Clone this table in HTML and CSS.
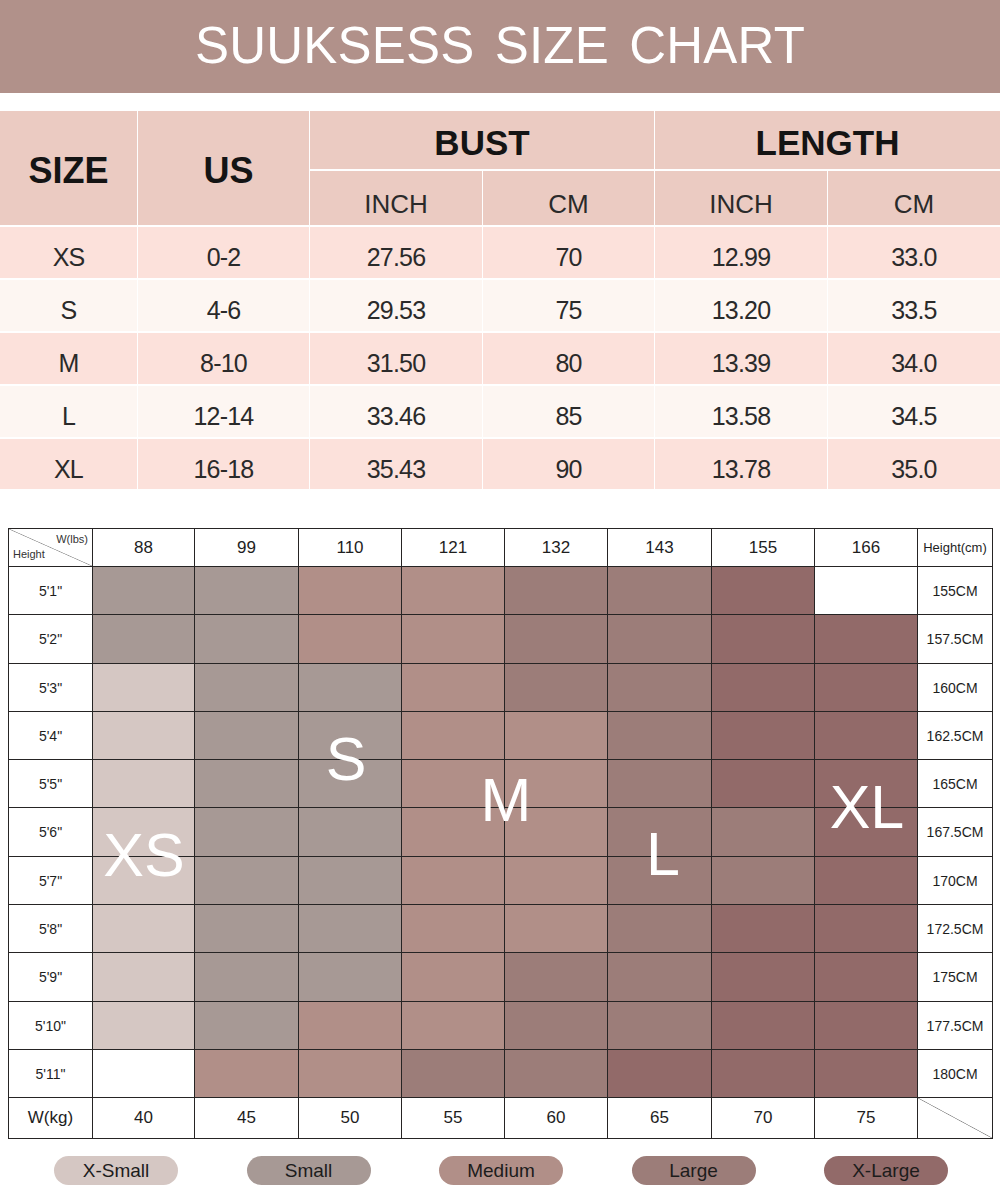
FILE: index.html
```html
<!DOCTYPE html>
<html lang="en">
<head>
<meta charset="utf-8">
<title>SUUKSESS Size Chart</title>
<link rel="stylesheet" href="styles.css">
</head>
<body>
<div class="page">
  <header class="banner"><h1 class="title">SUUKSESS SIZE CHART</h1></header>

  <div class="sizes">
    <div class="th big-h span2">SIZE</div>
    <div class="th big-h span2 us">US</div>
    <div class="th grp bust">BUST</div>
    <div class="th grp len">LENGTH</div>
    <div class="th sub">INCH</div>
    <div class="th sub">CM</div>
    <div class="th sub">INCH</div>
    <div class="th sub">CM</div>

    <div class="td pk">XS</div><div class="td pk">0-2</div><div class="td pk">27.56</div><div class="td pk">70</div><div class="td pk">12.99</div><div class="td pk">33.0</div>
    <div class="td lt">S</div><div class="td lt">4-6</div><div class="td lt">29.53</div><div class="td lt">75</div><div class="td lt">13.20</div><div class="td lt">33.5</div>
    <div class="td pk">M</div><div class="td pk">8-10</div><div class="td pk">31.50</div><div class="td pk">80</div><div class="td pk">13.39</div><div class="td pk">34.0</div>
    <div class="td lt">L</div><div class="td lt">12-14</div><div class="td lt">33.46</div><div class="td lt">85</div><div class="td lt">13.58</div><div class="td lt">34.5</div>
    <div class="td pk">XL</div><div class="td pk">16-18</div><div class="td pk">35.43</div><div class="td pk">90</div><div class="td pk">13.78</div><div class="td pk">35.0</div>
  </div>

  <div class="fit">
    <div class="c corner"><span class="wl">W(lbs)</span><span class="hl">Height</span></div>
    <div class="c hd">88</div><div class="c hd">99</div><div class="c hd">110</div><div class="c hd">121</div><div class="c hd">132</div><div class="c hd">143</div><div class="c hd">155</div><div class="c hd">166</div>
    <div class="c hcm">Height(cm)</div>

    <div class="c rl">5'1"</div><div class="c s"></div><div class="c s"></div><div class="c m"></div><div class="c m"></div><div class="c l"></div><div class="c l"></div><div class="c xl"></div><div class="c w"></div><div class="c cm">155CM</div>
    <div class="c rl">5'2"</div><div class="c s"></div><div class="c s"></div><div class="c m"></div><div class="c m"></div><div class="c l"></div><div class="c l"></div><div class="c xl"></div><div class="c xl"></div><div class="c cm">157.5CM</div>
    <div class="c rl">5'3"</div><div class="c xs"></div><div class="c s"></div><div class="c s"></div><div class="c m"></div><div class="c l"></div><div class="c l"></div><div class="c xl"></div><div class="c xl"></div><div class="c cm">160CM</div>
    <div class="c rl">5'4"</div><div class="c xs"></div><div class="c s"></div><div class="c s"></div><div class="c m"></div><div class="c m"></div><div class="c l"></div><div class="c xl"></div><div class="c xl"></div><div class="c cm">162.5CM</div>
    <div class="c rl">5'5"</div><div class="c xs"></div><div class="c s"></div><div class="c s"></div><div class="c m"></div><div class="c m"></div><div class="c l"></div><div class="c xl"></div><div class="c xl"></div><div class="c cm">165CM</div>
    <div class="c rl">5'6"</div><div class="c xs"></div><div class="c s"></div><div class="c s"></div><div class="c m"></div><div class="c m"></div><div class="c l"></div><div class="c l"></div><div class="c xl"></div><div class="c cm">167.5CM</div>
    <div class="c rl">5'7"</div><div class="c xs"></div><div class="c s"></div><div class="c s"></div><div class="c m"></div><div class="c m"></div><div class="c l"></div><div class="c l"></div><div class="c xl"></div><div class="c cm">170CM</div>
    <div class="c rl">5'8"</div><div class="c xs"></div><div class="c s"></div><div class="c s"></div><div class="c m"></div><div class="c m"></div><div class="c l"></div><div class="c xl"></div><div class="c xl"></div><div class="c cm">172.5CM</div>
    <div class="c rl">5'9"</div><div class="c xs"></div><div class="c s"></div><div class="c s"></div><div class="c m"></div><div class="c l"></div><div class="c l"></div><div class="c xl"></div><div class="c xl"></div><div class="c cm">175CM</div>
    <div class="c rl">5'10"</div><div class="c xs"></div><div class="c s"></div><div class="c m"></div><div class="c m"></div><div class="c l"></div><div class="c l"></div><div class="c xl"></div><div class="c xl"></div><div class="c cm">177.5CM</div>
    <div class="c rl">5'11"</div><div class="c w"></div><div class="c m"></div><div class="c m"></div><div class="c l"></div><div class="c l"></div><div class="c xl"></div><div class="c xl"></div><div class="c xl"></div><div class="c cm">180CM</div>

    <div class="c kg">W(kg)</div>
    <div class="c hd">40</div><div class="c hd">45</div><div class="c hd">50</div><div class="c hd">55</div><div class="c hd">60</div><div class="c hd">65</div><div class="c hd">70</div><div class="c hd">75</div>
    <div class="c diag"></div>

    <span class="zone z-xs">XS</span>
    <span class="zone z-s">S</span>
    <span class="zone z-m">M</span>
    <span class="zone z-l">L</span>
    <span class="zone z-xl">XL</span>
  </div>

  <div class="legend">
    <div class="pill p-xs">X-Small</div>
    <div class="pill p-s">Small</div>
    <div class="pill p-m">Medium</div>
    <div class="pill p-l">Large</div>
    <div class="pill p-xl">X-Large</div>
  </div>
</div>
</body>
</html>
```

FILE: styles.css
```css
html, body {
  margin: 0;
  padding: 0;
  background: #fff;
  overflow: hidden;
}

.page {
  width: 1000px;
  height: 1185px;
  font-family: "Liberation Sans", Arial, sans-serif;
  color: #222;
}

/* ---------- banner ---------- */
.banner {
  height: 93px;
  box-sizing: border-box;
  padding-top: 20px;
  background: #b1918a;
}

.title {
  margin: 0;
  font-size: 51px;
  line-height: 51px;
  font-weight: normal;
  color: #fff;
  text-align: center;
  word-spacing: 6px;
  letter-spacing: 0.2px;
}

/* ---------- size table ---------- */
.sizes {
  margin-top: 18px;
  display: grid;
  grid-template-columns: 137px 171px 172px 171px 172px 172px;
  grid-template-rows: 58px 54px 51px 51px 51px 51px 50px;
  column-gap: 1px;
  row-gap: 2px;
  background: #fff;
}

.th {
  background: #ebcbc2;
  display: flex;
  align-items: center;
  justify-content: center;
  color: #141414;
}

.span2 {
  grid-row: 1 / span 2;
}

.big-h {
  font-size: 36px;
  font-weight: bold;
  padding-top: 6px;
}

.us {
  padding-left: 10px;
}

.grp {
  font-size: 35px;
  font-weight: bold;
  padding-top: 5px;
}

.bust { grid-column: 3 / span 2; }
.len { grid-column: 5 / span 2; }

.sub {
  font-size: 26px;
  padding-top: 12px;
  color: #2a2a2a;
}

.td {
  display: flex;
  align-items: center;
  justify-content: center;
  font-size: 25px;
  letter-spacing: -0.8px;
  padding-top: 10px;
  color: #2a2a2a;
}

.pk { background: #fce1db; }
.lt { background: #fdf6f2; }

/* ---------- fit grid ---------- */
.fit {
  position: relative;
  margin: 39px 0 0 8px;
  width: max-content;
  display: grid;
  grid-template-columns: 83px 101px 103px 102px 102px 102px 103px 102px 102px 74px;
  grid-template-rows: 37px 47px 48px 47px 47px 47px 48px 47px 47px 48px 47px 47px 40px;
  gap: 1px;
  padding: 1px;
  background: #262424;
}

.c {
  background: #fff;
  display: flex;
  align-items: center;
  justify-content: center;
  color: #1e1e1e;
}

.hd { font-size: 17px; }
.kg { font-size: 17px; }
.rl { font-size: 14px; }
.cm { font-size: 14px; }
.hcm { font-size: 13px; }

.xs { background: #d5c7c3; }
.s { background: #a79995; }
.m { background: #b18f88; }
.l { background: #9c7d79; }
.xl { background: #926a69; }
.w { background: #fff; }

.corner {
  position: relative;
  background: linear-gradient(to top right, #fff calc(50% - 0.7px), #9a9a9a 50%, #fff calc(50% + 0.7px));
}

.wl, .hl {
  position: absolute;
  font-size: 11px;
  line-height: 1;
  color: #333;
}

.wl { top: 5px; right: 4px; }
.hl { bottom: 6px; left: 4px; }

.diag {
  background: linear-gradient(to top right, #fff calc(50% - 0.7px), #8e8e8e 50%, #fff calc(50% + 0.7px));
}

.zone {
  position: absolute;
  font-size: 61px;
  line-height: 1;
  color: #fff;
  transform: translateX(-50%);
  white-space: nowrap;
}

.z-xs { left: 136px; top: 297px; }
.z-s { left: 338px; top: 201px; }
.z-m { left: 498px; top: 242px; }
.z-l { left: 655px; top: 296px; }
.z-xl { left: 859px; top: 249px; }

/* ---------- legend ---------- */
.legend {
  margin-top: 17px;
  padding-left: 54px;
  display: flex;
  gap: 68.5px;
}

.pill {
  width: 124px;
  height: 29px;
  border-radius: 15px;
  font-size: 19px;
  line-height: 29px;
  text-align: center;
  color: #1c1c1c;
}

.p-xs { background: #d5c7c3; }
.p-s { background: #a79995; }
.p-m { background: #b18f88; }
.p-l { background: #9c7d79; }
.p-xl { background: #926a69; }
```
